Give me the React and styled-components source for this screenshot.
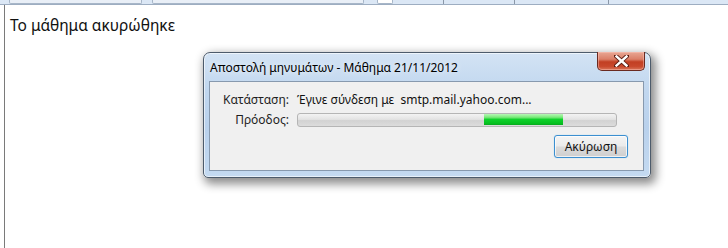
import React from "react";
import styled, { createGlobalStyle } from "styled-components";

const Global = createGlobalStyle`
  html, body { margin: 0; padding: 0; background: #fff; }
  body { width: 728px; height: 248px; overflow: hidden; font-family: "Noto Sans", "Open Sans", sans-serif; }
`;

const Screen = styled.div`
  position: relative;
  width: 728px;
  height: 248px;
  display: flex;
  flex-direction: column;
`;

const TopBar = styled.div`
  height: 4px;
  flex: none;
  background: #dbe7f5;
  border-bottom: 1px solid #9dadc1;
  display: flex;
  align-items: flex-end;
  padding-left: 9px;
`;

const FieldStub = styled.div`
  width: ${(p) => p.$w}px;
  margin-right: ${(p) => p.$gap}px;
  height: 3px;
  background: ${(p) => (p.$white ? "#fff" : "#e9eff7")};
  border: 1px solid #a7b6c8;
  border-top: none;
  border-radius: 0 0 2px 2px;
  flex: none;
`;

const Sep = styled.div`
  width: 1px;
  height: 4px;
  background: #8a97a8;
  margin-left: ${(p) => p.$gap}px;
  flex: none;
`;

const Page = styled.div`
  flex: 1;
  margin-left: 4px;
  border-left: 1px solid #7a7a7a;
  padding: 10px 0 0 5px;
`;

const Message = styled.div`
  font-size: 15.5px;
  color: #111;
  line-height: 20px;
`;

const Window = styled.div`
  position: absolute;
  left: 203px;
  top: 52px;
  width: 448px;
  height: 126px;
  box-sizing: border-box;
  border: 1px solid #4d5b6b;
  border-radius: 7px 7px 5px 5px;
  background: linear-gradient(180deg, #d3e3f4 0%, #c1d7ef 30%, #b9d1ec 60%, #c4daf1 100%);
  box-shadow: 3px 4px 10px 2px rgba(0, 0, 0, 0.45), inset 0 0 0 1px rgba(255, 255, 255, 0.6);
  display: flex;
  flex-direction: column;
  padding: 0 6px 6px 5px;
`;

const TitleBar = styled.div`
  height: 28px;
  flex: none;
  display: flex;
  align-items: flex-start;
  justify-content: space-between;
`;

const Title = styled.div`
  font-size: 12px;
  color: #000;
  padding: 7px 0 0 1px;
  line-height: 16px;
  text-shadow: 0 0 6px rgba(255, 255, 255, 0.9);
`;

const CloseButton = styled.div`
  width: 48px;
  height: 19px;
  margin-top: -1px;
  margin-right: -1px;
  box-sizing: border-box;
  border: 1px solid #6a2a20;
  border-top: none;
  border-radius: 0 0 5px 5px;
  background: linear-gradient(180deg, #e8a794 0%, #db7f68 40%, #c23f23 55%, #c8482c 80%, #d9765a 100%);
  box-shadow: inset 0 0 0 1px rgba(255, 200, 190, 0.45);
  display: flex;
  align-items: center;
  justify-content: center;
`;

const Panel = styled.div`
  flex: 1;
  background: #f0f0f0;
  border: 1px solid #8799ae;
  display: flex;
  flex-direction: column;
  padding: 9px 14px 0 0;
`;

const Grid = styled.div`
  display: grid;
  grid-template-columns: 86px 1fr;
  column-gap: 1px;
  row-gap: 3px;
  align-items: center;
  font-size: 12px;
  color: #111;
`;

const Label = styled.div`
  justify-self: end;
  padding-right: ${(p) => p.$pad}px;
  line-height: 17px;
  color: #1e1e1e;
`;

const Value = styled.div`
  line-height: 17px;
`;

const Progress = styled.div`
  position: relative;
  width: 320px;
  height: 14px;
  box-sizing: border-box;
  border: 1px solid #b5b5b5;
  border-radius: 3px;
  background: linear-gradient(180deg, #f3f3f3 0%, #e3e3e3 45%, #d2d2d2 55%, #dcdcdc 100%);
  overflow: hidden;
`;

const Chunk = styled.div`
  position: absolute;
  top: 0;
  bottom: 1px;
  background: linear-gradient(180deg, #b6f7b6 0%, #7ae97a 30%, #0fd12b 50%, #06c120 85%, #0aa61f 100%);
`;

const Actions = styled.div`
  display: flex;
  justify-content: flex-end;
  margin-top: 7px;
  margin-right: 1px;
`;

const Button = styled.button`
  width: 74px;
  height: 23px;
  box-sizing: border-box;
  border: 1px solid #3c8fd0;
  border-radius: 3px;
  background: linear-gradient(180deg, #f4f4f4 0%, #ebebeb 48%, #dbdbdb 52%, #cfcfcf 100%);
  box-shadow: inset 0 0 0 1px rgba(255, 255, 255, 0.7), 0 0 1px 0 #7ec6f0;
  font-family: "Noto Sans", "Open Sans", sans-serif;
  font-size: 12px;
  color: #111;
  padding: 0;
`;

export default function App() {
  return (
    <Screen>
      <Global />
      <TopBar>
        <FieldStub $w={131} $gap={10} />
        <FieldStub $w={210} $gap={13} />
        <FieldStub $w={14} $gap={0} $white />
        <Sep $gap={50} />
        <Sep $gap={70} />
        <Sep $gap={93} />
      </TopBar>
      <Page>
        <Message>Το μάθημα ακυρώθηκε</Message>
      </Page>
      <Window>
        <TitleBar>
          <Title>Αποστολή μηνυμάτων - Μάθημα 21/11/2012</Title>
          <CloseButton>
            <svg width="15" height="12" viewBox="0 0 15 12">
              <path d="M2 1 L13 11 M13 1 L2 11" stroke="#5a1c12" strokeWidth="4.2" strokeLinecap="square" />
              <path d="M2.5 1.5 L12.5 10.5 M12.5 1.5 L2.5 10.5" stroke="#ffffff" strokeWidth="2.4" strokeLinecap="square" />
            </svg>
          </CloseButton>
        </TitleBar>
        <Panel>
          <Grid>
            <Label $pad={7}>Κατάσταση:</Label>
            <Value>Έγινε σύνδεση με&nbsp; smtp.mail.yahoo.com...</Value>
            <Label $pad={7}>Πρόοδος:</Label>
            <Progress>
              <Chunk style={{ left: 186, width: 79 }} />
            </Progress>
          </Grid>
          <Actions>
            <Button>Ακύρωση</Button>
          </Actions>
        </Panel>
      </Window>
    </Screen>
  );
}
